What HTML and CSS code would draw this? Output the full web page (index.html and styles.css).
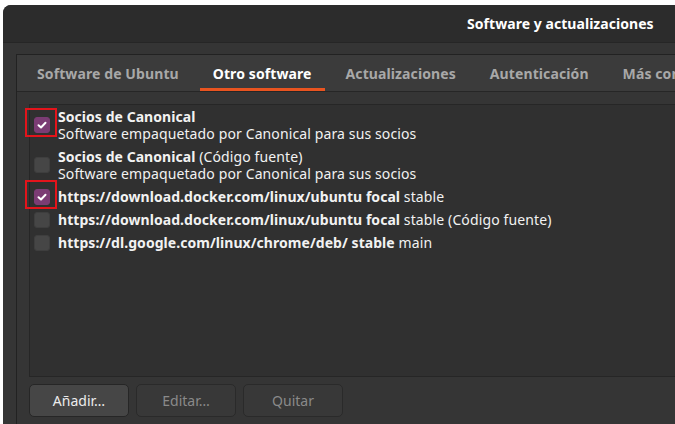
FILE: index.html
```html
<!DOCTYPE html>
<html lang="es">
<head>
<meta charset="utf-8">
<title>Software y actualizaciones</title>
<link rel="stylesheet" href="styles.css">
</head>
<body>
<div class="window">
  <header class="header">
    <span class="title">Software y actualizaciones</span>
  </header>
  <div class="notebook">
    <nav class="tabs">
      <span class="tab">Software de Ubuntu</span>
      <span class="tab active">Otro software</span>
      <span class="tab">Actualizaciones</span>
      <span class="tab">Autenticación</span>
      <span class="tab">Más configuraciones</span>
    </nav>
    <div class="page">
      <div class="list">
        <div class="row">
          <span class="check on marked"><svg viewBox="0 0 16 16"><path d="M4.5 8.2 L7 10.5 L11.5 5.8"/></svg></span>
          <div class="text">
            <div><b>Socios de Canonical</b></div>
            <div>Software empaquetado por Canonical para sus socios</div>
          </div>
        </div>
        <div class="row">
          <span class="check"></span>
          <div class="text">
            <div><b>Socios de Canonical</b> (Código fuente)</div>
            <div>Software empaquetado por Canonical para sus socios</div>
          </div>
        </div>
        <div class="row">
          <span class="check on marked"><svg viewBox="0 0 16 16"><path d="M4.5 8.2 L7 10.5 L11.5 5.8"/></svg></span>
          <div class="text"><div><b>https://download.docker.com/linux/ubuntu focal</b> stable</div></div>
        </div>
        <div class="row">
          <span class="check"></span>
          <div class="text"><div><b>https://download.docker.com/linux/ubuntu focal</b> stable (Código fuente)</div></div>
        </div>
        <div class="row">
          <span class="check"></span>
          <div class="text"><div><b>https://dl.google.com/linux/chrome/deb/ stable</b> main</div></div>
        </div>
      </div>
      <div class="buttons">
        <button class="btn">Añadir…</button>
        <button class="btn" disabled>Editar…</button>
        <button class="btn" disabled>Quitar</button>
      </div>
    </div>
  </div>
</div>
</body>
</html>
```

FILE: styles.css
```css
* { box-sizing: border-box; }
html, body { margin: 0; padding: 0; background: #ffffff; overflow: hidden; }
body {
  font-family: "Noto Sans", "Open Sans", sans-serif;
  font-size: 14px;
  color: #f2f2f2;
  width: 675px;
  height: 424px;
}
.window {
  margin: 5px 0 0 3px;
  width: 720px;
  height: 419px;
  background: #353535;
  border-radius: 8px 8px 0 0;
  overflow: hidden;
  display: flex;
  flex-direction: column;
}
.header {
  height: 38px;
  flex: none;
  background: #2c2c2c;
  display: flex;
  align-items: center;
  padding-left: 464px;
  border-bottom: 1px solid #262626;
}
.title { font-weight: 700; font-size: 14px; color: #ffffff; letter-spacing: 0.05px; }
.notebook {
  margin: 11px 0 0 13px;
  flex: 1;
  border-left: 1px solid #222;
  border-top: 1px solid #222;
  display: flex;
  flex-direction: column;
}
.tabs {
  height: 37px;
  flex: none;
  background: #3b3b3b;
  border-bottom: 1px solid #262626;
  display: flex;
  padding-left: 7px;
  white-space: nowrap;
}
.tab {
  display: flex;
  align-items: center;
  padding: 0 13px;
  margin-right: 8px;
  font-weight: 700;
  color: #a8a8a8;
  letter-spacing: 0.1px;
}
.tab.active { color: #ffffff; box-shadow: inset 0 -3px 0 #e95420; }
.page {
  flex: 1;
  padding: 12px 0 0 12px;
  background: #353535;
}
.list {
  height: 273px;
  background: #303030;
  border: 1px solid #262626;
  border-right: none;
}
.row {
  display: flex;
  align-items: center;
  padding: 3px 4px;
  line-height: 17px;
  white-space: nowrap;
}
.text { letter-spacing: 0.12px; }
.text b { font-weight: 700; letter-spacing: 0.05px; }
.check {
  position: relative;
  width: 16px;
  height: 16px;
  flex: none;
  margin-right: 8px;
  border-radius: 3px;
  background: #464646;
  border: 1px solid #3e3e3e;
}
.check.on { background: #7b3c74; border-color: #7b3c74; }
.check svg { position: absolute; left: -1px; top: -1px; width: 16px; height: 16px; fill: none; stroke: #ffffff; stroke-width: 2; stroke-linecap: round; stroke-linejoin: round; }
.check.marked::after {
  content: "";
  box-sizing: border-box;
  position: absolute;
  left: -10px;
  top: -10px;
  width: 32px;
  height: 29px;
  border: 2px solid #e3141b;
}
.buttons {
  display: flex;
  gap: 7px;
  margin-top: 7px;
}
.btn {
  width: 100px;
  height: 33px;
  border-radius: 5px;
  border: 1px solid #262626;
  background: #464646;
  color: #ececec;
  font-family: inherit;
  font-size: 14px;
  padding: 0;
}
.btn:disabled { background: #383838; color: #8a8a8a; border-color: #2a2a2a; }
```
